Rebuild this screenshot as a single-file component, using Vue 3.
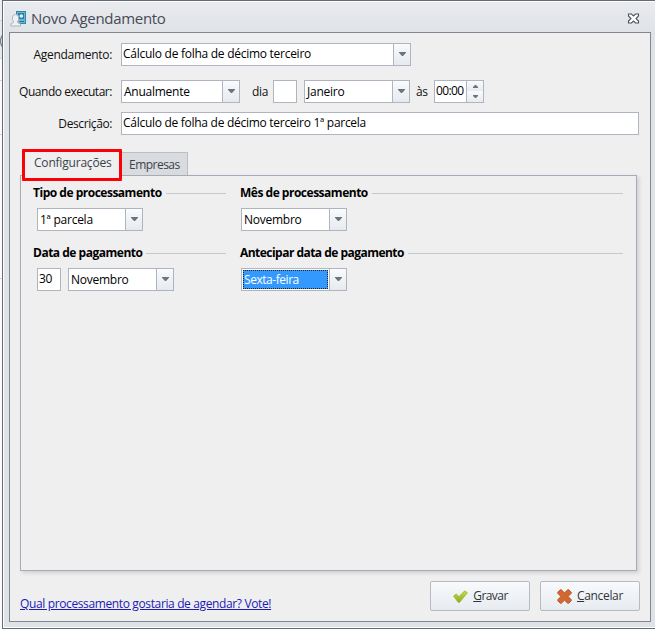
<script setup>
import { h } from 'vue'

const Combo = (props) =>
  h('div', { class: ['combo', { focused: props.focused }] }, [
    h('span', { class: 'value' }, [h('span', props.text)]),
    h('span', { class: 'drop' }, [
      h('svg', { width: 7, height: 4, viewBox: '0 0 7 4' }, [
        h('path', { d: 'M0 0H7V.8L4 4H3L0 .8Z', fill: '#6e747c' }),
      ]),
    ]),
  ])
Combo.props = ['text', 'focused']
</script>

<template>
  <div class="desktop">
    <div class="behind">
      <i class="b1"></i>
      <i class="b2"><svg width="2" height="14" viewBox="0 0 2 14"><path d="M2.5 1Q-1.5 7 2.5 13" fill="none" stroke="#777c85" stroke-width="1.2" /></svg></i>
      <i class="b3"></i><i class="b4"></i><i class="b5"></i>
    </div>
    <div class="window">
      <header class="titlebar">
        <svg class="appicon" width="17" height="17" viewBox="0 0 17 17">
          <rect x="6.5" y="1.5" width="9" height="12" fill="#6bb7d2" stroke="#2f87ac" />
          <rect x="8" y="3" width="6" height="6" fill="#2d7fa6" />
          <circle cx="11.3" cy="6" r="1.8" fill="#e3f2f7" />
          <path d="M9.5 11.5H14" stroke="#287493" />
          <path d="M.8 16V14L3.6 12.4L2.5 9.5V7Q2.6 4.6 5.5 4.6Q8.6 4.6 8.6 7V9.5L7.4 12.4L10.5 14V16Z" fill="#eff1f4" stroke="#a9b0b7" stroke-width=".9" />
        </svg>
        <h1>Novo Agendamento</h1>
        <svg class="close" width="13" height="11" viewBox="0 0 13 11">
          <path d="M1.5 1H4.5L6.5 3L8.5 1H11.5V3L9 5.5L11.5 8V10H8.5L6.5 8L4.5 10H1.5V8L4 5.5L1.5 3Z" fill="#fff" stroke="#4d535c" stroke-width="1.1" />
        </svg>
      </header>
      <main>
        <div class="row r1">
          <label class="l1"><span>Agendamento:</span></label>
          <Combo class="wide up" text="Cálculo de folha de décimo terceiro" />
        </div>
        <div class="row r2">
          <label class="l2"><span>Quando executar:</span></label>
          <Combo class="period" text="Anualmente" />
          <span class="dia">dia</span>
          <div class="input day"></div>
          <Combo class="month" text="Janeiro" />
          <span class="as">às</span>
          <div class="spin">
            <span>00:00</span>
            <div class="arrows">
              <svg width="16" height="21" viewBox="0 0 16 21">
                <path d="M6 7V6L8 4H9L11 6V7ZM6 14V15L8 17H9L11 15V14Z" fill="#6e747c" />
              </svg>
            </div>
          </div>
        </div>
        <div class="row r3">
          <label class="l3"><span>Descrição:</span></label>
          <div class="input desc"><span>Cálculo de folha de décimo terceiro 1ª parcela</span></div>
        </div>

        <nav class="tabs">
          <div class="tab active"><span>Configurações</span></div>
          <div class="tab"><span>Empresas</span></div>
        </nav>
        <section class="panel">
          <fieldset>
            <h2><span>Tipo de processamento</span></h2>
            <div class="fields"><Combo class="month" text="1ª parcela" /></div>
          </fieldset>
          <fieldset>
            <h2><span>Mês de processamento</span></h2>
            <div class="fields"><Combo class="month" text="Novembro" /></div>
          </fieldset>
          <fieldset>
            <h2><span>Data de pagamento</span></h2>
            <div class="fields">
              <div class="input day num"><span>30</span></div>
              <Combo class="month" text="Novembro" />
            </div>
          </fieldset>
          <fieldset>
            <h2 class="long"><span>Antecipar data de pagamento</span></h2>
            <div class="fields"><Combo class="month" text="Sexta-feira" :focused="true" /></div>
          </fieldset>
        </section>

        <footer>
          <a>Qual processamento gostaria de agendar? Vote!</a>
          <button class="save">
            <svg width="15" height="13" viewBox="0 0 15 13">
              <defs>
                <linearGradient id="gr" x2="0" y2="1"><stop stop-color="#c3dc4c" /><stop offset="1" stop-color="#8fae20" /></linearGradient>
              </defs>
              <path d="M.6 6L3.2 4L6 6.6L11.8 .8L14.4 2.8L6.5 12.4H5.2Z" fill="url(#gr)" stroke="#9ab62d" stroke-width=".8" />
            </svg>
            <span><u>G</u>ravar</span>
          </button>
          <button class="cancel">
            <svg width="15" height="15" viewBox="0 0 14 14">
              <path d="M3 .7H4L7 3.6L10 .7H11L13.3 3V4L10.4 7L13.3 10V11L11 13.3H10L7 10.4L4 13.3H3L.7 11V10L3.6 7L.7 4V3Z" fill="#d4672f" stroke="#b04f20" stroke-width=".8" />
            </svg>
            <span><u>C</u>ancelar</span>
          </button>
        </footer>
      </main>
    </div>
  </div>
</template>

<style>
body { overflow: hidden; }
.combo { display: flex; flex: none; box-sizing: border-box; height: 23px; border: 1px solid #aeb5c0; background: #fff; color: #000; }
.combo .value { flex: 1; display: flex; align-items: center; padding: 1px 0 0 2px; line-height: 16px; white-space: nowrap; letter-spacing: -0.25px; }
.combo.up .value { padding: 0 0 1px 1px; letter-spacing: -0.27px; }
.combo .drop { width: 17px; box-sizing: border-box; border-left: 1px solid #aeb5c0; background: linear-gradient(#f9fbfc, #e6eaef); display: flex; justify-content: center; align-items: center; padding-bottom: 1px; }
.combo.focused .value { margin: 1px; padding: 1px 0 0; border: 1px dotted #e69a3c; outline: 1px dotted #222; outline-offset: -1px; background: #3399ff; color: #fff; letter-spacing: -0.45px; }
</style>

<style scoped>
* { box-sizing: border-box; }
.desktop { width: 655px; height: 629px; display: flex; background: #f3f3f5; font: 12px/16px "Open Sans", "Noto Sans", sans-serif; letter-spacing: -0.35px; color: #111; overflow: hidden; white-space: nowrap; }
.behind { width: 2px; flex: none; display: flex; flex-direction: column; background: #fbfbfc; }
.behind i { flex: none; border-bottom: 1px solid #d3d5da; }
.behind .b1 { height: 21px; background: #edeff2; }
.behind .b2 { height: 38px; background: #e5e8ed; padding-top: 13px; }
.behind svg { display: block; }
.behind .b3 { height: 22px; }
.behind .b4 { height: 54px; }
.behind .b5 { height: 144px; }
.window { flex: none; width: 656px; height: 629px; border: 1px solid #636b79; box-shadow: inset 0 0 0 1px #fff; background: linear-gradient(#eaebef 0, #dfe2e6 32px, #dfe2e6 100%); background-clip: content-box; padding: 1px; display: flex; flex-direction: column; }
.titlebar { height: 30px; flex: none; display: flex; align-items: center; padding: 2px 16px 0 6px; }
.appicon { margin-top: 0; }
h1 { margin: 0 auto 0 4px; font-size: 15px; line-height: 20px; font-weight: 400; letter-spacing: -0.3px; color: #454b57; }
main { width: 642px; height: 590px; margin-left: 5px; border: 1px solid #7f8791; background: #efefef; padding: 10px 0 0; }
.row { display: flex; }
.r2 { margin-top: 14px; }
.r3 { margin-top: 9px; }
label { width: 102px; margin-right: 9px; text-align: right; padding-top: 4px; }
.r1 label { letter-spacing: -0.3px; }
.r2 label { letter-spacing: -0.46px; }
.r3 label { letter-spacing: -0.4px; }
.wide { width: 290px; }
.period { width: 119px; }
.month { width: 106px; }
.dia { margin: 4px 4px 0 12px; width: 17px; }
.input { height: 23px; border: 1px solid #aeb5c0; background: #fff; color: #000; padding: 2px 0 0 1px; letter-spacing: -0.28px; }
.day { width: 24px; margin-right: 7px; }
.as { margin: 4px 7px 0 6px; width: 11px; }
.spin { display: flex; width: 50px; height: 23px; border: 1px solid #aeb5c0; background: #fff; color: #000; letter-spacing: -0.65px; }
.spin > span { width: 31px; padding: 2px 0 0 1px; }
.arrows { width: 17px; border-left: 1px solid #aeb5c0; background: linear-gradient(#f8fafb, #e8ebef 48%, #f8fafb 50%, #e8ebef); }
.desc { width: 518px; }
.tabs { display: flex; align-items: flex-end; height: 32px; margin: 14px 0 -6px 12px; position: relative; }
.tab { width: 66px; height: 23px; margin-bottom: 6px; border: 1px solid #b9bfca; border-bottom: 0; border-left: 0; background: #d9dbdf; padding: 4px 0 0 7px; color: #3c424c; letter-spacing: -0.52px; }
.tab.active { width: 100px; height: 32px; margin: 0; border: 3px solid #fb0007; border-radius: 1px; background: #efefef; padding: 3px 0 0 9px; letter-spacing: -0.2px; }
.panel { width: 617px; height: 396px; margin-left: 10px; border: 1px solid #a5abb9; box-shadow: 2px 2px 4px #0002; display: grid; grid-template-columns: 207px 383px; grid-template-rows: 60px 60px; padding: 9px 0 0 12px; }
fieldset { border: 0; padding: 0; margin: 0; min-width: 0; }
fieldset:nth-child(odd) { padding-right: 14px; }
h2 { display: flex; align-items: center; gap: 4px; margin: 0 0 7px; font-size: 12px; line-height: 16px; color: #000; letter-spacing: -0.49px; }
h2.long { letter-spacing: -0.53px; }
h2::after { content: ""; flex: 1; height: 1px; background: #c6c8cb; }
.fields { display: flex; padding-left: 4px; }
fieldset:nth-child(even) .fields { padding-left: 1px; }
footer { display: flex; margin: 10px 0 0 10px; }
a { flex: none; width: 410px; padding-top: 15px; color: #1b1bb5; text-decoration: underline; letter-spacing: -0.37px; }
button { width: 100px; height: 30px; flex: none; margin-right: 10px; border: 1px solid #b5bac3; border-radius: 2px; background: linear-gradient(#f8fafc, #e7ebf0); padding: 0; font: inherit; letter-spacing: -0.33px; color: #30343c; display: flex; align-items: center; justify-content: center; gap: 5px; }
.save { letter-spacing: -0.55px; padding-left: 1px; }
</style>
